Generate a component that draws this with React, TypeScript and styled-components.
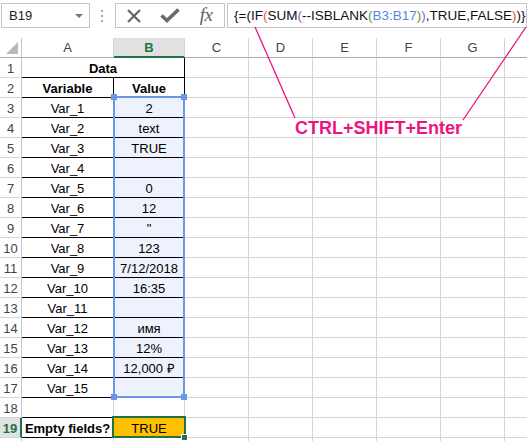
import React from 'react';
import styled, { createGlobalStyle } from 'styled-components';

const GlobalStyle = createGlobalStyle`
  html, body {
    margin: 0;
    padding: 0;
    background: #fff;
  }
  body {
    width: 527px;
    height: 441px;
    overflow: hidden;
    font-family: "Liberation Sans", Arial, sans-serif;
  }
`;

const GRID = '#d4d4d4';
const GREEN = '#217346';
const RANGE = '#6d95e8';
const PINK = '#ee1282';

type Row = { a: string; b: string; bold?: boolean; merged?: boolean };

const rows: Row[] = [
  { a: 'Data', b: '', bold: true, merged: true },
  { a: 'Variable', b: 'Value', bold: true },
  { a: 'Var_1', b: '2' },
  { a: 'Var_2', b: 'text' },
  { a: 'Var_3', b: 'TRUE' },
  { a: 'Var_4', b: '' },
  { a: 'Var_5', b: '0' },
  { a: 'Var_6', b: '12' },
  { a: 'Var_7', b: '"' },
  { a: 'Var_8', b: '123' },
  { a: 'Var_9', b: '7/12/2018' },
  { a: 'Var_10', b: '16:35' },
  { a: 'Var_11', b: '' },
  { a: 'Var_12', b: 'имя' },
  { a: 'Var_13', b: '12%' },
  { a: 'Var_14', b: '12,000 ₽' },
  { a: 'Var_15', b: '' },
];

// column H is only partly in view, its letter sits off-screen
const columns = ['A', 'B', 'C', 'D', 'E', 'F', 'G', ''];

const App = (): JSX.Element => {
  return (
    <Root>
      <GlobalStyle />
      <FormulaBar>
        <NameBox>
          B19
          <Caret />
        </NameBox>
        <Grip>
          <Dot />
          <Dot />
          <Dot />
        </Grip>
        <Buttons>
          <IconSlot>
            <svg width="16" height="14" viewBox="0 0 16 14">
              <path d="M2 1 L14 13 M14 1 L2 13" stroke="#666" strokeWidth="2.2" fill="none" />
            </svg>
          </IconSlot>
          <IconSlot>
            <svg width="20" height="15" viewBox="0 0 20 15">
              <path d="M1.5 7.5 L7 12.5 L18.5 1.5" stroke="#6b6b6b" strokeWidth="3.6" fill="none" strokeLinejoin="miter" />
            </svg>
          </IconSlot>
          <IconSlot>
            <Fx>fx</Fx>
          </IconSlot>
        </Buttons>
        <FormulaInput>
          {'{=('}IF<Tok $c="#e8573c">(</Tok>SUM<Tok $c="#a35ac8">(</Tok>--ISBLANK
          <Tok $c="#3fa34d">(</Tok>
          <Tok $c="#5b86e0">B3:B17</Tok>
          <Tok $c="#3fa34d">)</Tok>
          <Tok $c="#a35ac8">)</Tok>,TRUE,FALSE<Tok $c="#e8573c">)</Tok>
          {')}'}
        </FormulaInput>
      </FormulaBar>

      <Sheet>
        <Corner />
        {columns.map((c, i) => (
          <ColHead key={i} $active={c === 'B'}>
            {c}
          </ColHead>
        ))}

        {rows.map((r, idx) => (
          <React.Fragment key={idx}>
            <RowHead>{idx + 1}</RowHead>
            {r.merged ? (
              <Cell $span={2} $bb $br $bold>
                {r.a}
              </Cell>
            ) : (
              <>
                <Cell $bb $br $bold={r.bold}>
                  {r.a}
                </Cell>
                <Cell $bb $br $bold={r.bold} $fill={idx >= 2 ? '#eef2fc' : undefined}>
                  {r.b}
                </Cell>
              </>
            )}
            {[0, 1, 2, 3, 4, 5].map((k) => (
              <Cell key={k} />
            ))}
          </React.Fragment>
        ))}

        <RowHead>18</RowHead>
        <Cell $bb />
        {[0, 1, 2, 3, 4, 5, 6].map((k) => (
          <Cell key={k} />
        ))}

        <RowHead $active>19</RowHead>
        <Cell $bb $bold>
          Empty fields?
        </Cell>
        <Cell $fill="#ffc000">TRUE</Cell>
        {[0, 1, 2, 3, 4, 5].map((k) => (
          <Cell key={k} />
        ))}

        <RowHead />
        {[0, 1, 2, 3, 4, 5, 6, 7].map((k) => (
          <Cell key={k} />
        ))}

        <RangeBox />
        <Handle $x={114} $y={59} />
        <Handle $x={184} $y={59} />
        <Handle $x={114} $y={359} />
        <Handle $x={184} $y={359} />

        <ActiveBox />
        <FillHandle />
      </Sheet>

      <Annotation width="527" height="441" viewBox="0 0 527 441">
        <line x1="255" y1="27" x2="295" y2="118" stroke={PINK} strokeWidth="1.3" />
        <line x1="526" y1="27" x2="463" y2="120" stroke={PINK} strokeWidth="1.3" />
      </Annotation>
      <Label>CTRL+SHIFT+Enter</Label>
    </Root>
  );
};

const Root = styled.div`
  position: relative;
  width: 527px;
  height: 441px;
  overflow: hidden;
  background: #fff;
`;

const FormulaBar = styled.div`
  height: 38px;
  box-sizing: border-box;
  padding-top: 3px;
  display: flex;
  align-items: flex-start;
`;

const NameBox = styled.div`
  box-sizing: border-box;
  margin-left: 1px;
  width: 102px;
  height: 25px;
  border: 1px solid #c6c6c6;
  display: flex;
  align-items: center;
  justify-content: space-between;
  padding: 0 6px 0 7px;
  font-size: 13px;
  color: #222;
`;

const Caret = styled.span`
  width: 0;
  height: 0;
  border-top: 4px solid #777;
  border-left: 4px solid transparent;
  border-right: 4px solid transparent;
`;

const Grip = styled.div`
  width: 30px;
  height: 25px;
  display: flex;
  flex-direction: column;
  align-items: center;
  justify-content: center;
  gap: 3px;
`;

const Dot = styled.span`
  width: 2px;
  height: 2px;
  background: #a8a8a8;
`;

const Buttons = styled.div`
  box-sizing: border-box;
  width: 110px;
  height: 25px;
  border: 1px solid #c6c6c6;
  display: flex;
  align-items: center;
`;

const IconSlot = styled.div`
  width: 36px;
  height: 23px;
  display: flex;
  align-items: center;
  justify-content: center;
`;

const Fx = styled.span`
  font-family: "Liberation Serif", "Times New Roman", serif;
  font-style: italic;
  font-size: 19px;
  color: #5e5e5e;
  letter-spacing: -0.5px;
  margin-top: -2px;
`;

const FormulaInput = styled.div`
  box-sizing: border-box;
  margin-left: 2px;
  flex: 0 0 300px;
  height: 25px;
  border: 1px solid #c6c6c6;
  padding-left: 6px;
  font-size: 13.5px;
  letter-spacing: 0;
  line-height: 23px;
  color: #111;
  white-space: nowrap;
  overflow: hidden;
`;

const Tok = styled.span<{ $c: string }>`
  color: ${(p) => p.$c};
`;

const Sheet = styled.div`
  position: relative;
  display: grid;
  grid-template-columns: 22px 92px 71px repeat(5, 64px) 23px;
  grid-auto-rows: 20px;
  font-size: 13px;
`;

const Corner = styled.div`
  position: relative;
  box-sizing: border-box;
  border-right: 1px solid #c6c6c6;
  border-bottom: 1px solid #ababab;

  &::after {
    content: '';
    position: absolute;
    right: 3px;
    bottom: 3px;
    width: 0;
    height: 0;
    border-bottom: 12px solid #b9b9b9;
    border-left: 12px solid transparent;
  }
`;

const ColHead = styled.div<{ $active?: boolean }>`
  box-sizing: border-box;
  border-right: 1px solid ${GRID};
  border-bottom: ${(p) => (p.$active ? `2px solid ${GREEN}` : '1px solid #ababab')};
  background: ${(p) => (p.$active ? '#e1e1e1' : '#fff')};
  color: ${(p) => (p.$active ? GREEN : '#444')};
  font-weight: ${(p) => (p.$active ? 'bold' : 'normal')};
  text-align: center;
  line-height: 19px;
`;

const RowHead = styled.div<{ $active?: boolean }>`
  box-sizing: border-box;
  border-right: ${(p) => (p.$active ? `2px solid ${GREEN}` : '1px solid #c6c6c6')};
  border-bottom: 1px solid ${GRID};
  background: ${(p) => (p.$active ? '#e1e1e1' : '#fff')};
  color: ${(p) => (p.$active ? GREEN : '#444')};
  font-weight: ${(p) => (p.$active ? 'bold' : 'normal')};
  text-align: center;
  padding-top: 2px;
  line-height: 17px;
`;

const Cell = styled.div<{
  $bb?: boolean;
  $br?: boolean;
  $bold?: boolean;
  $fill?: string;
  $span?: number;
}>`
  box-sizing: border-box;
  grid-column: ${(p) => (p.$span ? `span ${p.$span}` : 'auto')};
  border-right: 1px solid ${(p) => (p.$br ? '#000' : GRID)};
  border-bottom: 1px solid ${(p) => (p.$bb ? '#000' : GRID)};
  background: ${(p) => p.$fill || '#fff'};
  color: #000;
  font-weight: ${(p) => (p.$bold ? 'bold' : 'normal')};
  text-align: center;
  padding-top: 2px;
  line-height: 17px;
  white-space: nowrap;
`;

const RangeBox = styled.div`
  position: absolute;
  left: 113px;
  top: 58px;
  width: 72px;
  height: 302px;
  box-sizing: border-box;
  border: 2px solid ${RANGE};
  pointer-events: none;
`;

const Handle = styled.span<{ $x: number; $y: number }>`
  position: absolute;
  left: ${(p) => p.$x - 3}px;
  top: ${(p) => p.$y - 3}px;
  width: 6px;
  height: 6px;
  background: ${RANGE};
`;

const ActiveBox = styled.div`
  position: absolute;
  left: 112px;
  top: 378px;
  width: 74px;
  height: 22px;
  box-sizing: border-box;
  border: 2px solid ${GREEN};
  pointer-events: none;
`;

const FillHandle = styled.span`
  position: absolute;
  left: 181px;
  top: 396px;
  width: 5px;
  height: 5px;
  background: ${GREEN};
  border: 1px solid #fff;
`;

const Annotation = styled.svg`
  position: absolute;
  left: 0;
  top: 0;
  pointer-events: none;
`;

const Label = styled.div`
  position: absolute;
  left: 295px;
  top: 119px;
  font-size: 18px;
  line-height: 18px;
  font-weight: bold;
  color: ${PINK};
  white-space: nowrap;
`;

export default App;
